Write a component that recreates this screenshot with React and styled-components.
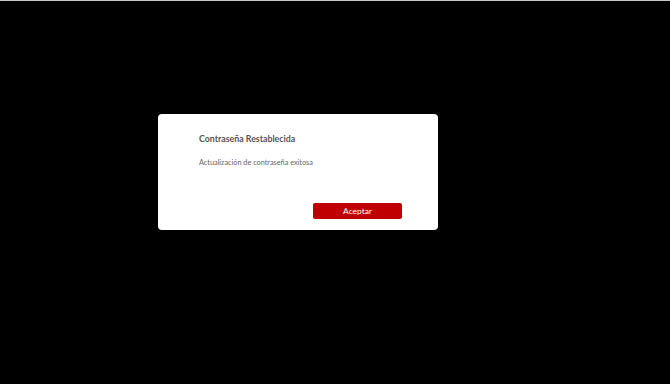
import React from 'react'
import styled, { createGlobalStyle } from 'styled-components'

const Global = createGlobalStyle`
    html, body {
        margin: 0;
        padding: 0;
        background: #000;
    }
    body {
        font-family: Lato, "Liberation Sans", sans-serif;
    }
`

const Screen = styled.div`
    width: 100%;
    height: 384px;
    background: #000;
    border-top: 1px solid #c8c8c8;
    box-sizing: border-box;
    display: flex;
    align-items: flex-start;
    justify-content: flex-start;
    padding: 113px 0 0 158px;
`

const Modal = styled.div`
    width: 280px;
    height: 116px;
    background: #fff;
    border-radius: 4px;
    box-sizing: border-box;
    padding: 19px 36px 11px 41px;
    display: flex;
    flex-direction: column;
    h2 {
        margin: 0;
        font-size: 8.8px;
        font-weight: 700;
        color: #555;
        line-height: 12px;
    }
    p {
        margin: 12px 0 0;
        font-size: 7.3px;
        color: #666;
        line-height: 12px;
    }
`

const Footer = styled.div`
    margin-top: auto;
    display: flex;
    justify-content: flex-end;
`

const Button = styled.button`
    width: 89px;
    height: 16px;
    border: none;
    border-radius: 2px;
    background: #c00000;
    color: #fff;
    font-family: Lato, "Liberation Sans", sans-serif;
    font-size: 8.4px;
    padding: 0;
    cursor: pointer;
`

const App = () => {
    return (
        <>
            <Global />
            <Screen>
                <Modal>
                    <h2>Contraseña Restablecida</h2>
                    <p>Actualización de contraseña exitosa</p>
                    <Footer>
                        <Button>Aceptar</Button>
                    </Footer>
                </Modal>
            </Screen>
        </>
    )
}

export default App
